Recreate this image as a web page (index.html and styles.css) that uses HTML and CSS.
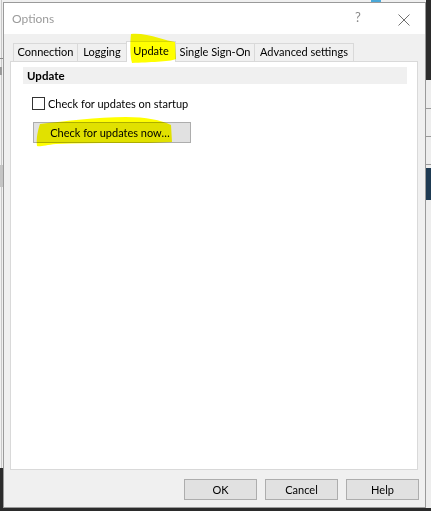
FILE: index.html
```html
<!DOCTYPE html>
<html>
<head>
<meta charset="utf-8">
<title>Options</title>
<link rel="stylesheet" href="styles.css">
</head>
<body>
<div class="desk">
  <div class="desk-left-line"></div>
  <div class="desk-left-block"></div>
  <div class="desk-left-bottom"></div>
  <div class="desk-left-mark"></div>
  <div class="desk-left-hline"></div>
  <div class="desk-right-top"></div>
  <div class="desk-right-mid"></div>
  <div class="desk-right-line l1"></div>
  <div class="desk-right-line l2"></div>
  <div class="desk-right-line l3"></div>
  <div class="desk-right-blue"></div>
  <div class="desk-top-blue"></div>
  <div class="desk-bottom"></div>

  <div class="dialog">
    <div class="titlebar">
      <span class="title">Options</span>
      <span class="help-q">?</span>
      <svg class="close-x" width="12" height="12" viewBox="0 0 12 12">
        <path d="M0.5 0.5 L11.5 11.5 M11.5 0.5 L0.5 11.5" stroke="#707070" stroke-width="1" fill="none"/>
      </svg>
    </div>
    <div class="content">
      <div class="tabs">
        <div class="tab t-conn">Connection</div>
        <div class="tab t-log">Logging</div>
        <div class="tab t-upd selected">Update</div>
        <div class="tab t-sso">Single Sign-On</div>
        <div class="tab t-adv">Advanced settings</div>
      </div>
      <div class="panel">
        <div class="section-head">Update</div>
        <label class="check-row">
          <span class="checkbox"></span>
          <span class="check-label">Check for updates on startup</span>
        </label>
        <div class="wide-btn">Check for updates now…</div>
      </div>
      <div class="footer">
        <div class="btn">OK</div>
        <div class="btn">Cancel</div>
        <div class="btn">Help</div>
      </div>
    </div>
  </div>

  <svg class="hl hl-tab" width="50" height="32" viewBox="0 0 50 32">
    <path d="M2 2 C10 1 20 3 30 6 C36 8 42 9 46 10 L47 27 C40 30 20 30 3 31 C1 24 1 10 2 2 Z" fill="#ffff00"/>
  </svg>
  <svg class="hl hl-btn" width="140" height="32" viewBox="0 0 140 32">
    <path d="M4 8 C30 5 60 1 90 1 C110 1 125 4 135 9 L136 26 C110 28 60 26 20 28 C10 29 4 31 1 30 C0 22 2 14 4 8 Z" fill="#ffff00"/>
  </svg>
</div>
</body>
</html>
```

FILE: styles.css
```css
* { box-sizing: border-box; }
html, body {
  margin: 0;
  padding: 0;
  width: 431px;
  height: 511px;
  overflow: hidden;
}
body {
  font-family: "Lato", "Noto Sans", sans-serif;
  font-size: 11px;
  color: #000;
  background: #f0f0f0;
}
.desk {
  position: relative;
  width: 431px;
  height: 511px;
  padding: 2px 5px 3px 3px;
}
.desk > div[class^="desk-"] { position: absolute; }
.desk-left-line { left: 1px; top: 0; width: 1px; height: 470px; background: #c8c8c8; }
.desk-left-hline { left: 0; top: 58px; width: 3px; height: 1px; background: #8a8a8a; }
.desk-left-block { left: 0; top: 165px; width: 3px; height: 22px; background: #c4c4c4; }
.desk-left-bottom { left: 0; top: 468px; width: 3px; height: 43px; background: #2b2b2b; }
.desk-left-mark { left: 0; top: 67px; width: 2px; height: 8px; background: #9a9a9a; }
.desk-right-top { left: 426px; top: 0; width: 5px; height: 108px; background: #2b2b2b; }
.desk-right-mid { left: 426px; top: 80px; width: 5px; height: 428px; background: #ededed; }
.desk-right-line { left: 426px; width: 5px; height: 1px; background: #9a9a9a; }
.desk-right-line.l1 { top: 108px; }
.desk-right-line.l2 { top: 136px; }
.desk-right-line.l3 { top: 164px; }
.desk-right-blue { left: 426px; top: 168px; width: 5px; height: 32px; background: #1e3a52; }
.desk-top-blue { left: 371px; top: 0; width: 10px; height: 2px; background: #4aa8d8; }
.desk-bottom { left: 0; top: 508px; width: 431px; height: 3px; background: #2b2b2b; }

.dialog {
  position: relative;
  width: 423px;
  height: 506px;
  border: 1px solid #9a9a9a;
  display: flex;
  flex-direction: column;
  background: #f0f0f0;
  z-index: 1;
}
.titlebar {
  height: 31px;
  background: #fff;
  display: flex;
  align-items: center;
  padding-left: 8px;
  position: relative;
}
.title {
  font-size: 12px;
  color: #9b9b9b;
  margin-top: -1px;
}
.help-q {
  position: absolute;
  left: 351px;
  top: 6px;
  font-size: 13px;
  color: #8a8a8a;
}
.close-x {
  position: absolute;
  left: 394px;
  top: 11px;
}
.content {
  flex: 1;
  display: flex;
  flex-direction: column;
  padding: 7px 7px 7px 6px;
}
.tabs {
  height: 20px;
  display: flex;
  align-items: flex-end;
  padding-left: 3px;
  position: relative;
  z-index: 2;
}
.tab {
  height: 18px;
  border: 1px solid #d9d9d9;
  border-bottom: none;
  border-right: none;
  background: #f0f0f0;
  text-align: center;
  line-height: 16px;
  white-space: nowrap;
}
.tab.t-adv { border-right: 1px solid #d9d9d9; }
.t-conn { width: 64px; }
.t-log { width: 49px; }
.t-upd { width: 50px; }
.t-sso { width: 78px; }
.t-adv { width: 100px; }
.tab.selected {
  height: 21px;
  margin-bottom: -1px;
  background: #fff;
  border-right: 1px solid #d9d9d9;
  line-height: 17px;
}
.tab.selected + .tab { border-left: none; }
.panel {
  flex: 1;
  background: #fff;
  border: 1px solid #d9d9d9;
  padding: 5px 10px 0 12px;
  display: flex;
  flex-direction: column;
  align-items: flex-start;
}
.section-head {
  align-self: stretch;
  height: 17px;
  background: #f0f0f0;
  font-weight: bold;
  font-size: 11.5px;
  padding-left: 4px;
  line-height: 17px;
}
.check-row {
  display: flex;
  align-items: center;
  margin-top: 13px;
  margin-left: 9px;
}
.checkbox {
  width: 13px;
  height: 13px;
  border: 1px solid #333;
  background: #fff;
}
.check-label {
  margin-left: 3px;
  line-height: 13px;
}
.wide-btn {
  margin-top: 12px;
  margin-left: 10px;
  width: 158px;
  height: 21px;
  background: #e1e1e1;
  border: 1px solid #adadad;
  text-align: center;
  line-height: 19px;
  padding-right: 4px;
}
.footer {
  display: flex;
  justify-content: flex-end;
  gap: 8px;
  margin-top: 9px;
  margin-right: -1px;
}
.btn {
  width: 73px;
  height: 21px;
  background: #e1e1e1;
  border: 1px solid #adadad;
  text-align: center;
  line-height: 19px;
}
.hl {
  position: absolute;
  mix-blend-mode: multiply;
  z-index: 5;
  pointer-events: none;
}
.hl-tab { left: 129px; top: 32px; }
.hl-btn { left: 36px; top: 116px; }
```
